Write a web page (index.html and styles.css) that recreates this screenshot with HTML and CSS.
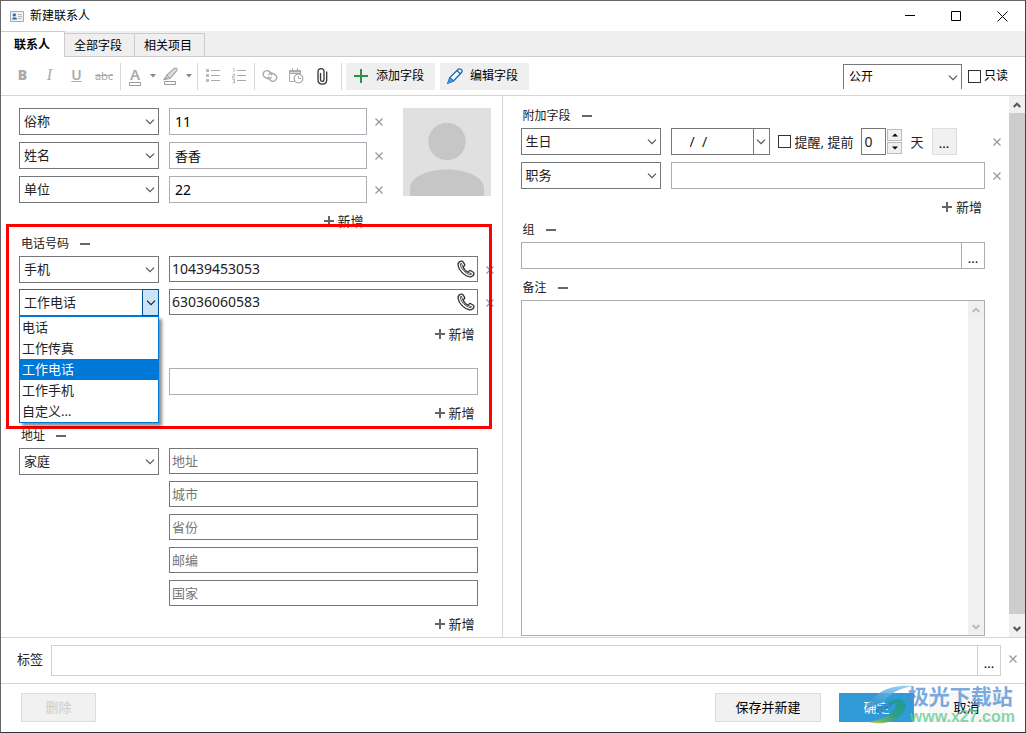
FILE: index.html
```html
<!DOCTYPE html>
<html lang="zh-CN">
<head>
<meta charset="utf-8">
<meta name="viewport" content="width=device-width, initial-scale=1">
<title>新建联系人</title>
<link rel="stylesheet" href="styles.css">
</head>
<body>
<svg class="sprite" aria-hidden="true">
  <symbol id="chevron" viewBox="0 0 10 6"><path d="M1 .7 5 4.7 9 .7" fill="none" stroke="currentColor" stroke-width="1.2"/></symbol>
  <symbol id="cross" viewBox="0 0 8 8"><path d="M.5.5 7.5 7.5M7.5.5.5 7.5" fill="none" stroke="currentColor" stroke-width="1.3"/></symbol>
  <symbol id="plus" viewBox="0 0 10 10"><path d="M0 5H10M5 0V10" fill="none" stroke="currentColor" stroke-width="2"/></symbol>
  <symbol id="caret" viewBox="0 0 6 4"><path d="M0 0H6L3 3.5Z" fill="currentColor"/></symbol>
  <symbol id="scroll-up" viewBox="0 0 8 6"><path d="M.7 5 4 1.7 7.3 5" fill="none" stroke="currentColor" stroke-width="2"/></symbol>
  <symbol id="scroll-down" viewBox="0 0 8 6"><path d="M.7 1 4 4.3 7.3 1" fill="none" stroke="currentColor" stroke-width="2"/></symbol>
  <symbol id="phone" viewBox="0 0 18 18"><path d="M4 1.200C2.200 1.700.8 3.300 1.100 5.300 1.700 10.200 7.400 16 12.400 16.800 14.800 17.100 16.800 15.600 17 13.600 17 12.900 16.800 12.500 16.300 12.200L13.800 10.700C13 10.200 12.200 10.500 11.800 11.300L11.200 12.300C9 11.400 6.700 9 5.900 6.800L7 6.100C7.700 5.700 7.900 5 7.500 4.200L6 1.800C5.600 1.200 4.900.9 4 1.200Z" fill="none" stroke="#333" stroke-width="1.300" stroke-linejoin="round"/><path d="M3.300 3.200C3 8 8.500 14.200 14.200 14.800M4.200 3 5.800 6.600M11.200 12.400 15.200 14" fill="none" stroke="#555" stroke-width="1"/></symbol>
</svg>

<div class="window">
  <header class="titlebar">
    <svg class="app-icon" width="14" height="11" viewBox="0 0 14 11" aria-hidden="true"><path d="M.5.5H13.5V10.5H.5Z" fill="#f3f3f3" stroke="#aaa"/><circle cx="4.3" cy="3.9" r="1.7" fill="#2f6fb0"/><path d="M2 8.5C2 5.5 7 5.5 7 8.5Z" fill="#2f6fb0"/><path d="M8 3.5H12M8 5.5H12M8 7.5H12" stroke="#bbb"/></svg>
    <h1 class="title">新建联系人</h1>
    <button class="win-btn" aria-label="最小化"><svg width="11" height="11"><path d="M0 4.5H10" stroke="#000"/></svg></button>
    <button class="win-btn" aria-label="最大化"><svg width="11" height="11"><path d="M.5.5H9.5V9.5H.5Z" fill="none" stroke="#000"/></svg></button>
    <button class="win-btn" aria-label="关闭"><svg width="11" height="11"><path d="M.5.5 10.5 10.5M10.5.5.5 10.5" stroke="#000"/></svg></button>
  </header>

  <nav class="tabs" role="tablist">
    <button class="tab tab--active" role="tab" aria-selected="true">联系人</button>
    <button class="tab" role="tab">全部字段</button>
    <button class="tab" role="tab">相关项目</button>
  </nav>

  <div class="toolbar" role="toolbar">
    <button class="tool tool--text"><b>B</b></button>
    <button class="tool tool--text tool--italic"><i>I</i></button>
    <button class="tool tool--text"><u>U</u></button>
    <button class="tool tool--strike"><s>abc</s></button>
    <span class="sep"></span>
    <button class="tool tool--color tool--font">A<svg width="12" height="4" aria-hidden="true"><path d="M.5.5H11.5V3.5H.5Z" fill="#fff" stroke="#999"/></svg></button>
    <button class="tool tool--caret" aria-label="字体颜色"><svg width="6" height="4"><use href="#caret"/></svg></button>
    <button class="tool tool--color" aria-label="突出显示"><svg width="16" height="18" viewBox="0 0 16 18"><path d="M1 12.5 4 8 11 1.5C13 .3 15 2 13.5 4L7 11.5Z" fill="#ddd" stroke="#aaa" stroke-width="1.2"/><path d="M4 8 7 11.5M1 12.5 5 11" stroke="#999"/><path d="M1.500 14.500H12.500V17.500H1.500Z" fill="#fff" stroke="#999"/></svg></button>
    <button class="tool tool--caret" aria-label="突出显示颜色"><svg width="6" height="4"><use href="#caret"/></svg></button>
    <span class="sep"></span>
    <button class="tool tool--icon" aria-label="项目符号"><svg width="15" height="14"><path d="M0 0H3V3H0ZM0 5H3V8H0ZM0 10H3V13H0Z" fill="#bbb"/><path d="M5 1.500H14M5 6.500H14M5 11.500H14" stroke="#aaa"/></svg></button>
    <button class="tool tool--icon" aria-label="编号"><svg width="15" height="16"><path d="M1 1 2 .5V4M.5 6H2.500V8H.5V10H3M.5 11.500H2.500V15H.5M1 13.200H2.500" fill="none" stroke="#aaa" stroke-width=".8"/><path d="M5 2.500H14M5 7.500H14M5 12.500H14" stroke="#aaa"/></svg></button>
    <span class="sep"></span>
    <button class="tool tool--icon" aria-label="链接"><svg width="16" height="14" viewBox="0 0 16 14"><g fill="none" stroke="#aaa" stroke-width="1.400"><path d="M9.500 8C7.500 10.500 4 9.500 2 7.500-.5 4.500 3 .5 6.500 2 8.500 3 10 4.500 9.500 6.500"/><path d="M6.500 6C8 3.500 11.500 4 13.500 6 16.500 9 13 13.500 9.500 12 7.500 11 6 9.500 6.500 7.500"/></g></svg></button>
    <button class="tool tool--icon" aria-label="日期"><svg width="16" height="16" viewBox="0 0 16 16"><g fill="none" stroke="#aaa"><path d="M6.500 13.500H1.500V2.500H12.500V6M1.500 5.500H12.500M4.500 0V4M9.500 0V4"/><path d="M2 3.500H12" stroke-width="2"/><circle cx="10.500" cy="10.500" r="4.300" stroke-width="1.300"/><path d="M10.500 8V10.500H13"/></g></svg></button>
    <button class="tool tool--icon" aria-label="附件"><svg width="11" height="17" viewBox="0 0 11 17"><path d="M3.500 5V11.500C3.500 14 7 14 7 11.500V3.500C7-.3 1-.3 1 3.500V12C1 17.500 9.700 17.500 9.700 12V3.500" fill="none" stroke="#333" stroke-width="1.300"/></svg></button>
    <span class="sep sep--wide"></span>
    <button class="action"><svg width="14" height="14" viewBox="0 0 14 14"><path d="M0 7H14M7 0V14" stroke="#2f9147" stroke-width="2"/></svg>添加字段</button>
    <button class="action action--edit"><svg width="16" height="16" viewBox="0 0 16 16"><path d="M.8 15.200 2.800 9.500 11 1.500C13-.2 16.200 2 14.500 4.500L6.500 13Z" fill="#f5f9fd" stroke="#1668b5" stroke-width="1.300"/><path d="M2.800 9.500 6.500 13M10 2.500 13.500 6" fill="none" stroke="#1668b5" stroke-width="1.200"/><path d="M.8 15.200 2.800 9.500 6.500 13Z" fill="#4a93d6"/></svg>编辑字段</button>
    <span class="combo combo--access">
      <select class="combo-field" aria-label="访问权限"><option>公开</option></select>
      <svg class="combo-arrow" width="10" height="6"><use href="#chevron"/></svg>
    </span>
    <label class="check check--small"><input type="checkbox">只读</label>
  </div>

  <main class="body">
    <section class="pane pane--left">
      <div class="profile section--spaced">
        <div class="profile-fields">
          <div class="rows">
            <div class="row">
              <span class="combo"><select class="combo-field" aria-label="字段"><option>俗称</option></select><svg class="combo-arrow" width="10" height="6"><use href="#chevron"/></svg></span>
              <input class="field field--name" aria-label="俗称" value="11">
              <button class="remove" aria-label="移除"><svg width="8" height="8"><use href="#cross"/></svg></button>
            </div>
            <div class="row">
              <span class="combo"><select class="combo-field" aria-label="字段"><option>姓名</option></select><svg class="combo-arrow" width="10" height="6"><use href="#chevron"/></svg></span>
              <input class="field field--name field--cjk" aria-label="姓名" value="香香">
              <button class="remove" aria-label="移除"><svg width="8" height="8"><use href="#cross"/></svg></button>
            </div>
            <div class="row">
              <span class="combo"><select class="combo-field" aria-label="字段"><option>单位</option></select><svg class="combo-arrow" width="10" height="6"><use href="#chevron"/></svg></span>
              <input class="field field--name" aria-label="单位" value="22">
              <button class="remove" aria-label="移除"><svg width="8" height="8"><use href="#cross"/></svg></button>
            </div>
          </div>
          <div class="add-row"><button class="add"><svg width="10" height="10"><use href="#plus"/></svg>新增</button></div>
        </div>
        <svg class="avatar" viewBox="0 0 88 88" role="img" aria-label="头像"><path d="M0 0H88V88H0Z" fill="#e0e0e0"/><circle cx="44" cy="33.500" r="18.700" fill="#c6c6c6"/><path d="M7 88V80C7 70 23 61.500 44 61.500S81 70 81 80V88Z" fill="#c6c6c6"/></svg>
      </div>

      <h2 class="heading">电话号码<span class="fold"></span></h2>
      <div class="rows rows--tight">
        <div class="row">
          <span class="combo"><select class="combo-field" aria-label="电话类型"><option>手机</option></select><svg class="combo-arrow" width="10" height="6"><use href="#chevron"/></svg></span>
          <span class="dial"><input class="dial-field" aria-label="手机" value="10439453053"><button class="dial-btn" aria-label="拨打"><svg width="18" height="18"><use href="#phone"/></svg></button></span>
          <button class="remove" aria-label="移除"><svg width="8" height="8"><use href="#cross"/></svg></button>
        </div>
        <div class="row">
          <span class="combo combo--open">
            <select class="combo-field" aria-label="电话类型"><option>工作电话</option></select>
            <span class="combo-button"><svg width="10" height="6"><use href="#chevron"/></svg></span>
            <ul class="options" role="listbox">
              <li role="option">电话</li>
              <li role="option">工作传真</li>
              <li role="option" aria-selected="true" class="selected">工作电话</li>
              <li role="option">工作手机</li>
              <li role="option">自定义...</li>
            </ul>
          </span>
          <span class="dial"><input class="dial-field" aria-label="工作电话" value="63036060583"><button class="dial-btn" aria-label="拨打"><svg width="18" height="18"><use href="#phone"/></svg></button></span>
          <button class="remove" aria-label="移除"><svg width="8" height="8"><use href="#cross"/></svg></button>
        </div>
      </div>
      <div class="add-row"><button class="add"><svg width="10" height="10"><use href="#plus"/></svg>新增</button></div>

      <div class="email section--spaced">
        <div class="row"><span></span><input class="field" aria-label="电子邮件"></div>
        <div class="add-row"><button class="add"><svg width="10" height="10"><use href="#plus"/></svg>新增</button></div>
      </div>

      <h2 class="heading">地址<span class="fold"></span></h2>
      <div class="row row--top">
        <span class="combo"><select class="combo-field" aria-label="地址类型"><option>家庭</option></select><svg class="combo-arrow" width="10" height="6"><use href="#chevron"/></svg></span>
        <div class="rows">
          <input class="field field--dark" placeholder="地址" aria-label="地址">
          <input class="field field--dark" placeholder="城市" aria-label="城市">
          <input class="field field--dark" placeholder="省份" aria-label="省份">
          <input class="field field--dark" placeholder="邮编" aria-label="邮编">
          <input class="field field--dark" placeholder="国家" aria-label="国家">
        </div>
      </div>
      <div class="add-row"><button class="add"><svg width="10" height="10"><use href="#plus"/></svg>新增</button></div>
      <div class="highlight"></div>
    </section>

    <section class="pane pane--right">
      <h2 class="heading">附加字段<span class="fold"></span></h2>
      <div class="rows">
        <div class="row row--birthday">
          <span class="combo"><select class="combo-field" aria-label="字段"><option>生日</option></select><svg class="combo-arrow" width="10" height="6"><use href="#chevron"/></svg></span>
          <div class="reminder">
            <span class="date"><input class="date-field" aria-label="生日" value="/  /"><button class="date-btn" aria-label="选择日期"><svg width="10" height="6"><use href="#chevron"/></svg></button></span>
            <label class="check"><input type="checkbox">提醒, 提前</label>
            <span class="spinner">
              <input class="spinner-field" aria-label="提前天数" value="0">
              <span class="spinner-buttons">
                <button aria-label="增加"><svg width="6" height="4"><path d="M0 3.500H6L3 .5Z"/></svg></button>
                <button aria-label="减少"><svg width="6" height="4"><path d="M0 .5H6L3 3.500Z"/></svg></button>
              </span>
            </span>
            <span>天</span>
            <button class="more">...</button>
          </div>
          <button class="remove" aria-label="移除"><svg width="8" height="8"><use href="#cross"/></svg></button>
        </div>
        <div class="row">
          <span class="combo"><select class="combo-field" aria-label="字段"><option>职务</option></select><svg class="combo-arrow" width="10" height="6"><use href="#chevron"/></svg></span>
          <input class="field" aria-label="职务">
          <button class="remove" aria-label="移除"><svg width="8" height="8"><use href="#cross"/></svg></button>
        </div>
      </div>
      <div class="add-row section--spaced"><button class="add"><svg width="10" height="10"><use href="#plus"/></svg>新增</button></div>

      <h2 class="heading">组<span class="fold"></span></h2>
      <div class="picker picker--group"><input aria-label="组"><button>...</button></div>

      <h2 class="heading heading--notes">备注<span class="fold"></span></h2>
      <div class="notes">
        <textarea aria-label="备注"></textarea>
        <div class="scroll scroll--disabled">
          <button aria-label="向上"><svg width="8" height="6"><use href="#scroll-up"/></svg></button>
          <button aria-label="向下"><svg width="8" height="6"><use href="#scroll-down"/></svg></button>
        </div>
      </div>
    </section>

    <div class="scroll">
      <button aria-label="向上"><svg width="8" height="6"><use href="#scroll-up"/></svg></button>
      <span class="thumb"></span>
      <button aria-label="向下"><svg width="8" height="6"><use href="#scroll-down"/></svg></button>
    </div>
  </main>

  <div class="tags">
    <label for="tags">标签</label>
    <div class="picker picker--tags"><input id="tags"><button>...</button></div>
    <button class="remove" aria-label="清除"><svg width="8" height="8"><use href="#cross"/></svg></button>
  </div>

  <footer class="footer">
    <button class="btn btn--delete" disabled>删除</button>
    <button class="btn btn--wide">保存并新建</button>
    <button class="btn btn--primary">确定</button>
    <button class="btn btn--cancel">取消</button>
    <div class="watermark">
      <svg width="50" height="42" viewBox="0 0 50 42" aria-hidden="true">
        <defs>
          <linearGradient id="wave" x1="0" y1="1" x2="1" y2="0"><stop offset="0" stop-color="#2a86c4"/><stop offset="1" stop-color="#8fd0f4"/></linearGradient>
          <linearGradient id="leaf" x1="0" y1="1" x2="1" y2="0"><stop offset="0" stop-color="#b9c84a"/><stop offset=".5" stop-color="#2fa07a"/><stop offset="1" stop-color="#1a9a8c"/></linearGradient>
        </defs>
        <path d="M0 24C8 9 20-1 48 1 32 3 22 10 17 18 11 19 5 21 0 24Z" fill="url(#wave)"/>
        <path d="M9 26C15 19 24 15 36 15 27 18 22 22 19 26 15 29 11 29 9 26Z" fill="#2c83bd"/>
        <path d="M2 37C14 36 28 29 30 20 29 17 25 17 21 18 28 13 36 12 39 18 43 28 25 43 2 37Z" fill="url(#leaf)"/>
      </svg>
      <div class="watermark-text"><span class="watermark-name">极光下载站</span><span class="watermark-url">www.x27.com</span></div>
    </div>
  </footer>
</div>
</body>
</html>
```
FILE: styles.css
```css
* { box-sizing: border-box; }

body {
  margin: 0;
  background: #fff;
  color: #222;
  font: 13px/20px "Noto Sans", "Noto Sans CJK SC", sans-serif;
}

button, input, select, textarea {
  margin: 0;
  padding: 0;
  border: 0;
  border-radius: 0;
  outline: 0;
  background: none;
  color: inherit;
  font: inherit;
}

input, textarea { min-width: 0; }
svg { display: block; flex: none; }
.sprite { position: absolute; width: 0; height: 0; }

.window {
  display: flex;
  flex-direction: column;
  min-height: 100vh;
  border: 1px solid #666;
  border-right-color: #444;
  border-bottom-color: #333;
}

/* Title bar */
.titlebar { display: flex; align-items: center; height: 30px; padding-left: 9px; }
.title { flex: 1; margin: 0 0 0 6px; font-size: 12px; font-weight: 400; color: #000; }
.win-btn { display: flex; align-items: center; justify-content: center; width: 46px; height: 28px; }

/* Tabs */
.tabs {
  display: flex;
  align-items: flex-end;
  height: 26px;
  background: #efefef;
  box-shadow: inset 0 -1px #ccc;
}
.tab {
  height: 24px;
  padding: 1px 12px 0 9px;
  border: solid #ccc;
  border-width: 1px 1px 1px 0;
  background: #efefef;
  color: #000;
  font-size: 12px;
  line-height: 20px;
}
.tab--active {
  height: 26px;
  padding: 0 14px 0 13px;
  border-bottom: 0;
  background: #fff;
  font-weight: 700;
}

/* Toolbar */
.toolbar {
  display: flex;
  align-items: center;
  height: 39px;
  padding: 0 17px 0 8px;
  border-bottom: 1px solid #d5d5d5;
}
.tool { display: flex; align-items: center; justify-content: center; height: 27px; color: #aaa; }
.tool--text { width: 27px; padding-bottom: 2px; font-size: 14px; font-weight: 600; }
.tool--italic { font-family: "Liberation Serif", serif; font-size: 16px; font-weight: 400; }
.tool--strike { width: 28px; font-size: 11px; }
.tool--color { width: 24px; }
.tool--font { flex-direction: column; font-size: 15px; font-weight: 600; line-height: 15px; }
.tool--caret { width: 12px; color: #888; }
.tool--icon { width: 26px; }
.sep { width: 1px; height: 27px; margin: 0 2px; background: #d8d8d8; }
.sep--wide { margin: 0 4px 0 6px; }
.action {
  display: flex;
  align-items: center;
  gap: 8px;
  height: 27px;
  margin-right: 5px;
  padding: 0 11px 0 8px;
  background: #efefef;
  color: #000;
  font-size: 12px;
}
.action--edit { gap: 7px; padding: 0 11px 0 7px; }

/* Combo box */
.combo { position: relative; display: block; width: 140px; }
.combo-field {
  display: block;
  width: 100%;
  height: 27px;
  padding: 0 20px 2px 4px;
  border: 1px solid #767779;
  appearance: none;
}
.combo-arrow { position: absolute; right: 4px; top: 11px; color: #555; pointer-events: none; }
.combo--access { width: 119px; margin-left: auto; }
.combo--access .combo-field {
  height: 25px;
  padding-bottom: 0;
  padding-left: 5px;
  border-bottom: 0;
  color: #000;
  font-size: 12px;
}
.combo--open .combo-field { border-color: #0078d7; }
.combo-button {
  position: absolute;
  top: 0;
  right: 0;
  display: flex;
  align-items: center;
  justify-content: center;
  width: 17px;
  height: 27px;
  border: 1px solid #005499;
  background: #cce4f7;
  pointer-events: none;
}
.options {
  position: absolute;
  z-index: 2;
  top: 27px;
  left: 0;
  right: 0;
  margin: 0;
  padding: 0;
  border: 1px solid #0078d7;
  background: #fff;
  box-shadow: 3px 3px 3px rgba(0, 0, 0, .45);
  list-style: none;
}
.options li { padding-left: 2px; line-height: 21px; }
.options .selected { background: #0078d7; color: #fff; }

/* Check box */
.check { display: flex; align-items: center; gap: 4px; white-space: nowrap; }
.check input { width: 13px; height: 13px; border: 1px solid #333; appearance: none; }
.check--small { gap: 3px; margin-left: 6px; color: #000; font-size: 12px; }

/* Panes */
.body { display: flex; flex: 1; border-bottom: 1px solid #d5d5d5; }
.pane { display: flex; flex-direction: column; padding-left: 18px; }
.pane--left { position: relative; flex: 501 1 0; padding-top: 12px; border-right: 1px solid #d5d5d5; }
.pane--right { flex: 507 1 0; padding-top: 8px; }

.heading { display: flex; align-items: center; gap: 11px; height: 24px; margin: 0; padding-left: 2px; font-size: 12px; font-weight: 400; }
.heading--notes { margin-top: 7px; }
.fold { width: 10px; height: 2px; background: #666; }
.section--spaced { margin-bottom: 1px; }

.rows { display: grid; gap: 7px; }
.rows--tight { gap: 6px; }
.row { display: grid; grid-template-columns: 140px minmax(0, 1fr) 24px; align-items: center; }
.row > :nth-child(2) { margin-left: 10px; }
.row--top { align-items: start; }

.field { height: 27px; padding-left: 3px; border: 1px solid #abadb3; font-size: 14px; }
.field--name { padding-left: 5px; color: #000; }
.field--cjk { font-size: 13px; }
.field--dark { height: 26px; padding-left: 2px; border-color: #767779; font-size: 13px; }
.field::placeholder { color: #777; opacity: 1; }
.remove { display: flex; align-items: center; justify-content: center; width: 24px; height: 20px; color: #999; }

.add-row { display: flex; justify-content: flex-end; margin-top: 8px; padding-right: 27px; }
.add { display: flex; align-items: center; gap: 4px; height: 20px; }
.add svg { color: #666; }

.profile { display: flex; align-items: flex-start; gap: 12px; padding-right: 11px; }
.profile-fields { flex: 1; min-width: 0; }
.avatar { width: 88px; height: 88px; }

.dial { display: flex; align-items: center; align-self: start; height: 26px; border: 1px solid #767779; }
.dial-field { flex: 1; padding-left: 2px; font-size: 14px; }
.dial-btn { padding-right: 2px; }

.email { padding-top: 24px; }

.highlight {
  position: absolute;
  top: 128px;
  left: 5px;
  right: 10px;
  height: 205px;
  border: 3px solid #fe0000;
  pointer-events: none;
}

.reminder { display: flex; align-items: center; gap: 8px; white-space: nowrap; }
.date { display: flex; width: 99px; height: 27px; border: 1px solid #767779; }
.date-field { flex: 1; padding-left: 18px; font-size: 14px; }
.date-btn { display: flex; align-items: center; justify-content: center; width: 16px; border-left: 1px solid #767779; color: #555; }
.spinner { display: flex; align-items: center; gap: 1px; }
.spinner-field { width: 25px; height: 27px; padding-left: 2px; border: 1px solid #767779; font-size: 14px; }
.spinner-buttons { display: grid; gap: 1px; }
.spinner-buttons button { display: flex; align-items: center; justify-content: center; width: 15px; height: 12px; border: 1px solid #bbb; background: #f0f0f0; }
.more { width: 25px; height: 27px; padding-top: 3px; border: 1px solid #ddd; background: #f1f1f1; color: #000; }

.picker { display: flex; border: 1px solid #abadb3; }
.picker input { flex: 1; }
.picker button { width: 23px; padding-top: 4px; border-left: 1px solid #abadb3; color: #000; }
.picker--group { height: 27px; margin-right: 24px; }
.picker--tags { flex: 1; height: 31px; border-color: #d0d0d0; }
.picker--tags button { border-color: #d0d0d0; }

.notes { display: flex; flex: 1; min-height: 120px; margin: 0 24px 1px 0; border: 1px solid #abadb3; }
.notes textarea { flex: 1; resize: none; }

/* Scroll bars */
.scroll { display: flex; flex-direction: column; justify-content: space-between; width: 16px; background: #f0f0f0; color: #555; }
.scroll button { display: flex; align-items: center; justify-content: center; height: 17px; }
.scroll--disabled { color: #bbb; }
.thumb { flex: 1; margin-bottom: 6px; background: #cdcdcd; }

/* Tags and footer */
.tags { display: flex; align-items: center; gap: 8px; height: 46px; padding-left: 16px; border-bottom: 1px solid #d5d5d5; }
.tags label { padding-bottom: 4px; }
.tags .remove { height: 24px; margin-left: -8px; padding-bottom: 4px; }

.footer { position: relative; display: flex; align-items: center; gap: 15px; height: 48px; padding: 0 21px 2px 20px; }
.btn { width: 75px; height: 29px; border: 1px solid #ddd; background: #f1f1f1; color: #000; }
.btn--delete { margin-right: auto; color: #ccc; }
.btn--wide { width: 106px; margin-right: 3px; }
.btn--primary { border-color: #309bd6; background: #309bd6; color: #fff; }
.btn--cancel { border-color: #eee; background: #f8f8f8; }

.watermark { position: absolute; right: 10px; bottom: 5px; display: flex; align-items: center; pointer-events: none; }
.watermark svg { margin-right: -8px; opacity: .85; }
.watermark-text { display: flex; flex-direction: column; font-weight: 700; opacity: .75; }
.watermark-name { color: #4f8fd4; font-size: 21px; line-height: 22px; }
.watermark-url { padding-left: 2px; color: #5fca8c; font-family: "Liberation Sans", sans-serif; font-size: 16px; line-height: 20px; }
```
